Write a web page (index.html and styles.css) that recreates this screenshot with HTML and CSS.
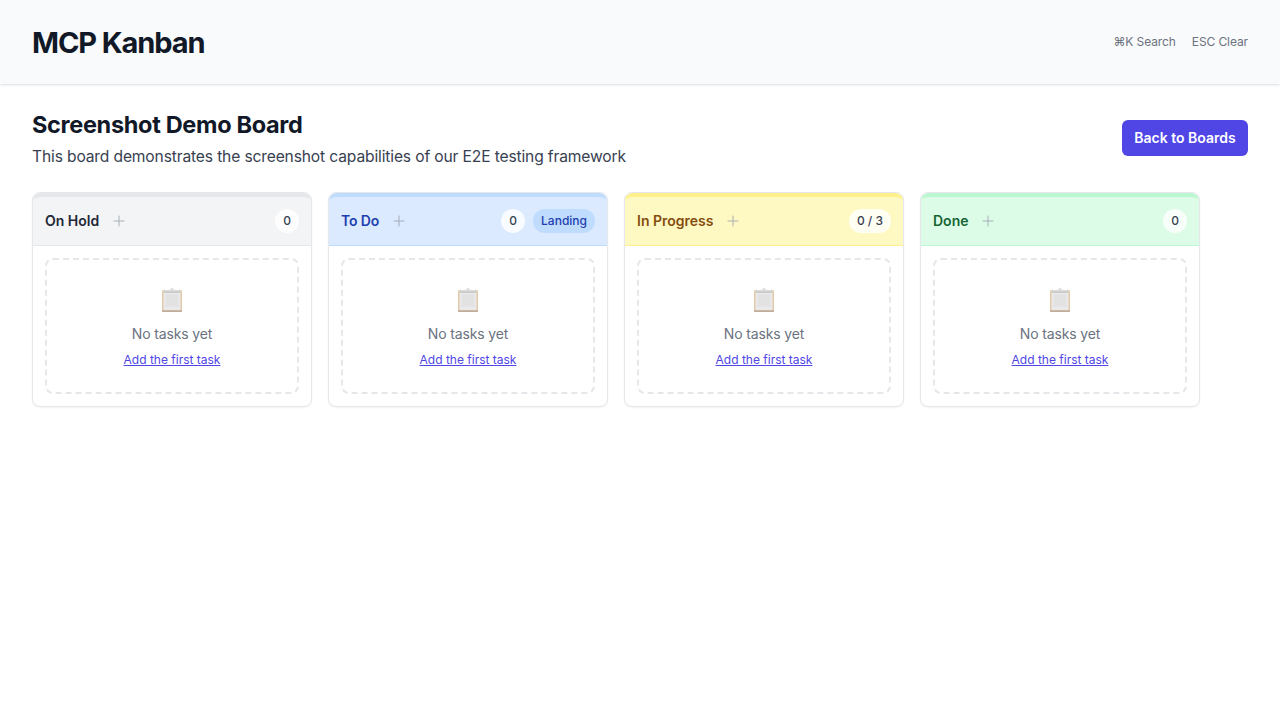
FILE: index.html
```html
<!DOCTYPE html>
<html lang="en">
<head>
<meta charset="utf-8">
<title>MCP Kanban</title>
<link rel="stylesheet" href="styles.css">
</head>
<body>
<header class="topbar">
  <h1 class="brand">MCP Kanban</h1>
  <div class="shortcuts"><span>⌘K Search</span><span>ESC Clear</span></div>
</header>
<main class="page">
  <div class="board-head">
    <div class="board-info">
      <h2 class="board-title">Screenshot Demo Board</h2>
      <p class="board-desc">This board demonstrates the screenshot capabilities of our E2E testing framework</p>
    </div>
    <button class="back">Back to Boards</button>
  </div>
  <div class="columns" id="columns"></div>
</main>
<script src="board.js"></script>
</body>
</html>
```

FILE: styles.css
```css
* { box-sizing: border-box; margin: 0; padding: 0; }
body { font-family: Inter, "Noto Sans", sans-serif; background: #fff; color: #111827; font-size: 16px; line-height: 24px; }
button { font: inherit; border: 0; background: none; }
.topbar { display: flex; align-items: center; justify-content: space-between; height: 84px; padding: 0 32px; background: #f9fafb; box-shadow: 0 1px 3px rgba(0,0,0,.1), 0 1px 2px -1px rgba(0,0,0,.1); }
.brand { padding-top: 1px; font-size: 29px; line-height: 36px; font-weight: 700; letter-spacing: -1.1px; }
.shortcuts { display: flex; gap: 16px; font-size: 12px; line-height: 16px; letter-spacing: -.1px; color: #6b7280; }
.page { padding: 24px 32px; }
.board-head { display: flex; align-items: center; justify-content: space-between; height: 60px; margin-bottom: 24px; }
.board-info { align-self: flex-start; }
.board-title { padding-top: 1px; font-size: 23.5px; line-height: 32px; font-weight: 700; letter-spacing: -.32px; }
.board-desc { margin-top: 4px; font-size: 15.6px; letter-spacing: -.14px; color: #374151; }
.back { width: 126px; height: 36px; border-radius: 6px; background: #4f46e5; color: #fff; font-size: 14px; line-height: 20px; font-weight: 600; }
.columns { display: flex; gap: 16px; }
.column { width: 280px; height: 215px; border: 1px solid #e5e7eb; border-radius: 8px; background: #fff; box-shadow: 0 1px 2px rgba(0,0,0,.05); }
.column-head { display: flex; align-items: center; justify-content: space-between; height: 53px; padding: 0 12px; border-top: 4px solid; border-bottom: 1px solid; border-radius: 8px 8px 0 0; }
.column-name { display: flex; align-items: center; gap: 12px; font-size: 14px; line-height: 20px; font-weight: 600; }
.column-label { font: inherit; }
.plus { width: 16px; height: 16px; color: #9ca3af; opacity: .85; }
.badges { display: flex; gap: 8px; font-size: 12px; line-height: 16px; font-weight: 500; }
.badge { padding: 4px 8px; border-radius: 12px; background: rgba(255,255,255,.8); color: #374151; }
.badge-landing { background: #bfdbfe; color: #1e40af; }
.hold .column-head { background: #f3f4f6; border-color: #e5e7eb; color: #1f2937; }
.todo .column-head { background: #dbeafe; border-color: #bfdbfe; color: #1e40af; }
.todo .column-name { letter-spacing: -.15px; }
.progress .column-head { background: #fef9c3; border-color: #fef08a; color: #854d0e; }
.done .column-head { background: #dcfce7; border-color: #bbf7d0; color: #166534; }
.empty { display: flex; flex-direction: column; align-items: center; height: 136px; margin: 12px; padding-top: 24px; border: 2px dashed #e5e7eb; border-radius: 8px; }
.clipboard { width: 24px; height: 32px; opacity: .5; }
.empty-text { margin-top: 8px; font-size: 14px; line-height: 20px; letter-spacing: -.14px; color: #6b7280; }
.add { margin-top: 8px; font-size: 12px; line-height: 16px; color: #4f46e5; text-decoration: underline; }
```

FILE: board.js
```js
const columns = [
  { name: "On Hold", kind: "hold", count: "0" },
  { name: "To Do", kind: "todo", count: "0", landing: true },
  { name: "In Progress", kind: "progress", count: "0 / 3" },
  { name: "Done", kind: "done", count: "0" }
];
document.getElementById("columns").innerHTML = columns.map(c => `
<section class="column ${c.kind}">
  <div class="column-head">
    <div class="column-name"><h3 class="column-label">${c.name}</h3>
      <svg class="plus" viewBox="0 0 24 24" fill="none" stroke="currentColor" stroke-width="1.5" stroke-linecap="round"><path d="M12 4.5v15m7.5-7.5h-15"/></svg>
    </div>
    <div class="badges"><span class="badge">${c.count}</span>${c.landing ? '<span class="badge badge-landing">Landing</span>' : ""}</div>
  </div>
  <div class="empty">
    <svg class="clipboard" viewBox="0 0 24 32">
      <rect x="2" y="6" width="20" height="22" rx="1" fill="#c99b5c"/>
      <path d="M2 26.200h20v1a.8.8 0 0 1-.8.800H2.800a.8.8 0 0 1-.8-.800z" fill="#80603c"/>
      <rect x="3.600" y="7.500" width="16.800" height="18.500" fill="#d6d6d8"/>
      <rect x="5.500" y="10.500" width="13" height="12" fill="#c6c6c8"/>
      <path d="M4 6.200h5l1.500-1.200a1.600 1.600 0 0 1 3 0L15 6.200h5v2H4z" fill="#b9bcc1"/>
      <path d="M3.600 8.200h16.800" stroke="#77777a" stroke-width="1"/>
    </svg>
    <p class="empty-text">No tasks yet</p>
    <button class="add">Add the first task</button>
  </div>
</section>`).join("");
```
